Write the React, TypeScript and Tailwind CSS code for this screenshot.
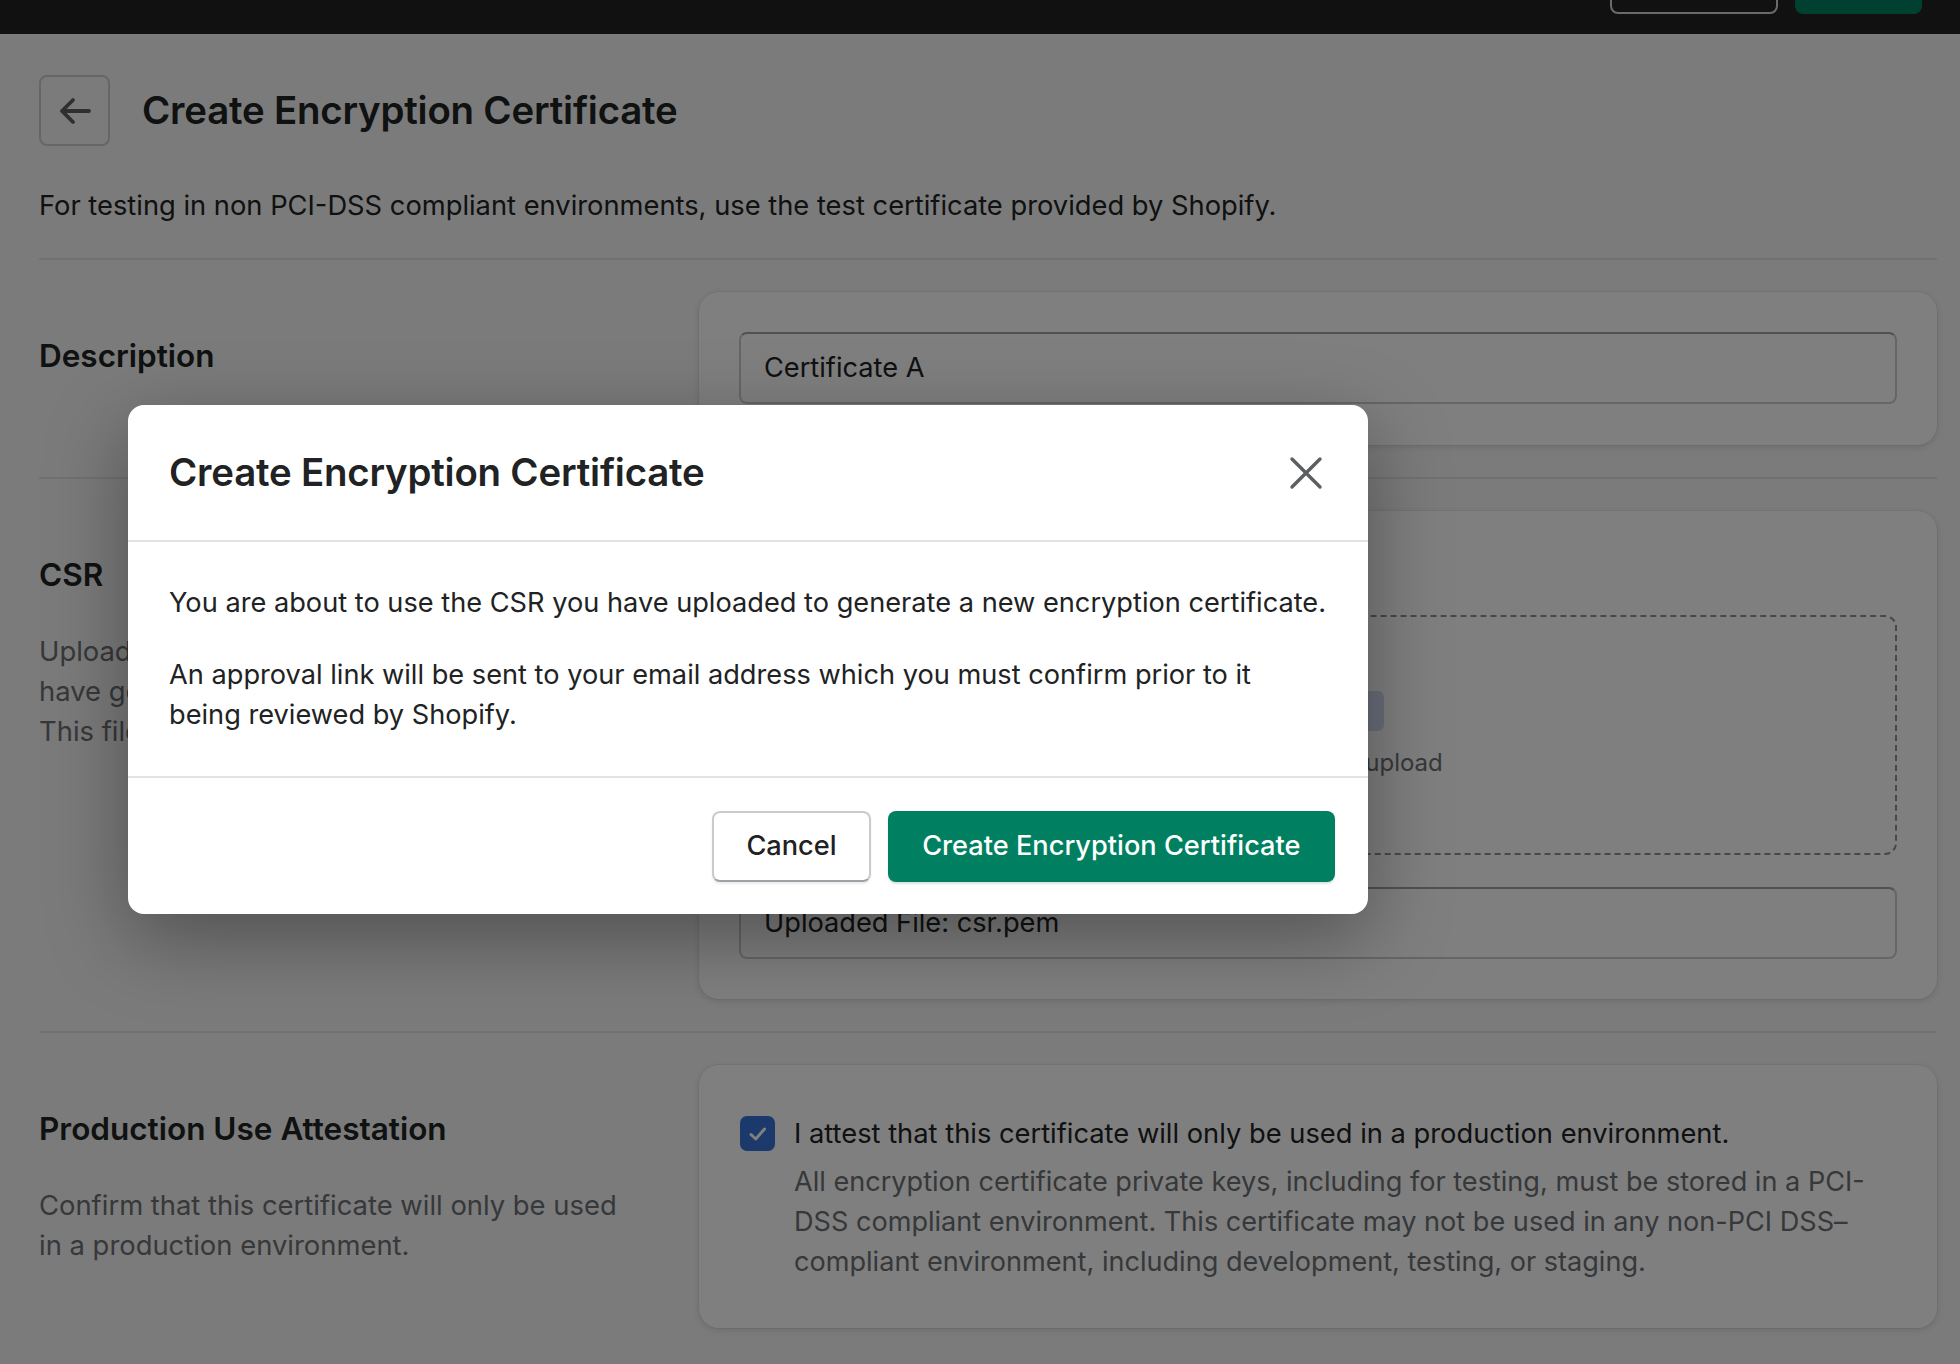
import React from "react";

function BackArrow() {
  return (
    <svg width="34" height="30" viewBox="0 0 34 30" fill="none">
      <path
        d="M31 15H4M15 4L4 15L15 26"
        stroke="#5c5f62"
        strokeWidth={3.8}
        strokeLinecap="round"
        strokeLinejoin="round"
      />
    </svg>
  );
}

function CloseIcon() {
  return (
    <svg width="34" height="34" viewBox="0 0 34 34" fill="none">
      <path
        d="M3 3L31 31M31 3L3 31"
        stroke="#5c5f62"
        strokeWidth={3.4}
        strokeLinecap="round"
      />
    </svg>
  );
}

function CheckIcon() {
  return (
    <svg width="24" height="24" viewBox="0 0 24 24" fill="none">
      <path
        d="M5 12.5L9.8 17L18.5 7"
        stroke="#ffffff"
        strokeWidth={3}
        strokeLinecap="round"
        strokeLinejoin="round"
      />
    </svg>
  );
}

// left column of each annotated section
function Annotation({ title, children }: { title: string; children?: React.ReactNode }) {
  return (
    <div className="pt-[40px]">
      <h2 className="text-[31.5px] leading-[48px] font-semibold text-[#202223]">{title}</h2>
      {children && (
        <div className="mt-[32px] text-[27.4px] leading-[40px] text-[#6d7175]">{children}</div>
      )}
    </div>
  );
}

const card =
  "bg-white rounded-[20px] shadow-[0_0_0_1px_rgba(63,63,68,0.05),0_2px_6px_rgba(63,63,68,0.15)]";

const input =
  "h-[72px] rounded-[8px] border-2 border-[#c9cccf] border-t-[#9ea3a8] bg-white px-[23px] flex items-center text-[27.2px] text-[#202223]";

export default function App() {
  return (
    <div className="relative min-h-screen bg-[#f6f6f7] font-['Inter','Noto_Sans',sans-serif] overflow-hidden">
      {/* top bar, scrolled so only the bottom of its buttons shows */}
      <div className="h-[34px] bg-[#222222] flex justify-end items-start gap-[17px] pr-[38px] overflow-hidden">
        <div className="w-[168px] h-[40px] -mt-[26px] rounded-[8px] border-2 border-[#d4d4d4]"></div>
        <div className="w-[127px] h-[40px] -mt-[26px] rounded-[8px] bg-[#008060]"></div>
      </div>

      <div className="pl-[39px] pr-[23px]">
        {/* page header */}
        <div className="flex items-center gap-[32px] pt-[41px]">
          <button className="w-[71px] h-[71px] rounded-[8px] border-2 border-[#c9cccf] flex items-center justify-center">
            <BackArrow />
          </button>
          <h1 className="text-[38.4px] font-semibold text-[#202223] tracking-[-0.2px]">
            Create Encryption Certificate
          </h1>
        </div>
        <p className="mt-[40px] text-[27.3px] leading-[40px] text-[#202223]">
          For testing in non PCI-DSS compliant environments, use the test certificate provided by Shopify.
        </p>

        {/* Description */}
        <div className="mt-[32px] border-t-2 border-[#e1e3e5] py-[32px] grid grid-cols-[600px_1fr] gap-[60px]">
          <Annotation title="Description" />
          <div className={`${card} px-[40px] pt-[40px] pb-[41px]`}>
            <div className={input}>Certificate A</div>
          </div>
        </div>

        {/* CSR */}
        <div className="border-t-2 border-[#e1e3e5] py-[32px] grid grid-cols-[600px_1fr] gap-[60px]">
          <Annotation title="CSR">
            Upload the signing request (CSR) that you
            <br />
            have generated using your private key.
            <br />
            This file must be in PEM format.
          </Annotation>
          <div className={`${card} p-[40px]`}>
            <div className="text-[27.2px] leading-[40px] text-[#202223]">CSR file</div>
            <div className="mt-[24px] h-[240px] rounded-[12px] border-2 border-dashed border-[#8c9196] flex flex-col items-center justify-center gap-[16px]">
              <div className="h-[40px] px-[24px] rounded-[6px] bg-[#d3ddf5] text-[#1f5199] text-[23px] font-medium flex items-center">
                Add file
              </div>
              <div className="text-[24px] leading-[32px] text-[#6d7175]">or drop files to upload</div>
            </div>
            <div className={`${input} mt-[32px]`}>Uploaded File: csr.pem</div>
          </div>
        </div>

        {/* Production Use Attestation */}
        <div className="border-t-2 border-[#e1e3e5] pt-[32px] pb-[40px] grid grid-cols-[600px_1fr] gap-[60px]">
          <Annotation title="Production Use Attestation">
            Confirm that this certificate will only be used in a production environment.
          </Annotation>
          <div className={`${card} px-[41px] pt-[49px] pb-[46px]`}>
            <div className="flex gap-[19px]">
              <div className="mt-[2px] w-[35px] h-[35px] shrink-0 rounded-[7px] bg-[#3674d6] flex items-center justify-center">
                <CheckIcon />
              </div>
              <div>
                <div className="text-[27.3px] leading-[40px] text-[#202223]">
                  I attest that this certificate will only be used in a production environment.
                </div>
                <div className="mt-[8px] text-[27.1px] leading-[40px] text-[#6d7175]">
                  All encryption certificate private keys, including for testing, must be stored in a PCI-DSS
                  compliant environment. This certificate may not be used in any non-PCI DSS–compliant
                  environment, including development, testing, or staging.
                </div>
              </div>
            </div>
          </div>
        </div>
      </div>

      {/* modal backdrop */}
      <div className="absolute inset-0 bg-black/50"></div>

      {/* modal */}
      <div className="absolute left-[128px] top-[405px] w-[1240px] bg-white rounded-[16px] shadow-[0_24px_80px_rgba(0,0,0,0.35)]">
        <div className="h-[137px] pl-[41px] pr-[42px] flex items-center justify-between border-b-2 border-[#e1e3e5]">
          <h2 className="text-[38.4px] font-semibold text-[#202223] tracking-[-0.2px]">
            Create Encryption Certificate
          </h2>
          <button className="w-[40px] h-[40px] flex items-center justify-center">
            <CloseIcon />
          </button>
        </div>
        <div className="px-[41px] py-[41px] text-[27.2px] leading-[40px] text-[#202223] flex flex-col gap-[32px]">
          <p>You are about to use the CSR you have uploaded to generate a new encryption certificate.</p>
          <p>
            An approval link will be sent to your email address which you must confirm prior to it
            <br />
            being reviewed by Shopify.
          </p>
        </div>
        <div className="border-t-2 border-[#e1e3e5] pt-[33px] pb-[32px] pr-[33px] flex justify-end gap-[17px]">
          <button className="h-[71px] px-[32px] rounded-[8px] border-2 border-[#c9cccf] border-b-[#9ea3a8] bg-white text-[27.2px] font-medium text-[#202223] shadow-[0_2px_2px_rgba(0,0,0,0.08)]">
            Cancel
          </button>
          <button className="h-[71px] px-[34.5px] rounded-[8px] bg-[#008060] text-[27.2px] font-medium text-white shadow-[0_2px_2px_rgba(0,0,0,0.12)]">
            Create Encryption Certificate
          </button>
        </div>
      </div>
    </div>
  );
}
